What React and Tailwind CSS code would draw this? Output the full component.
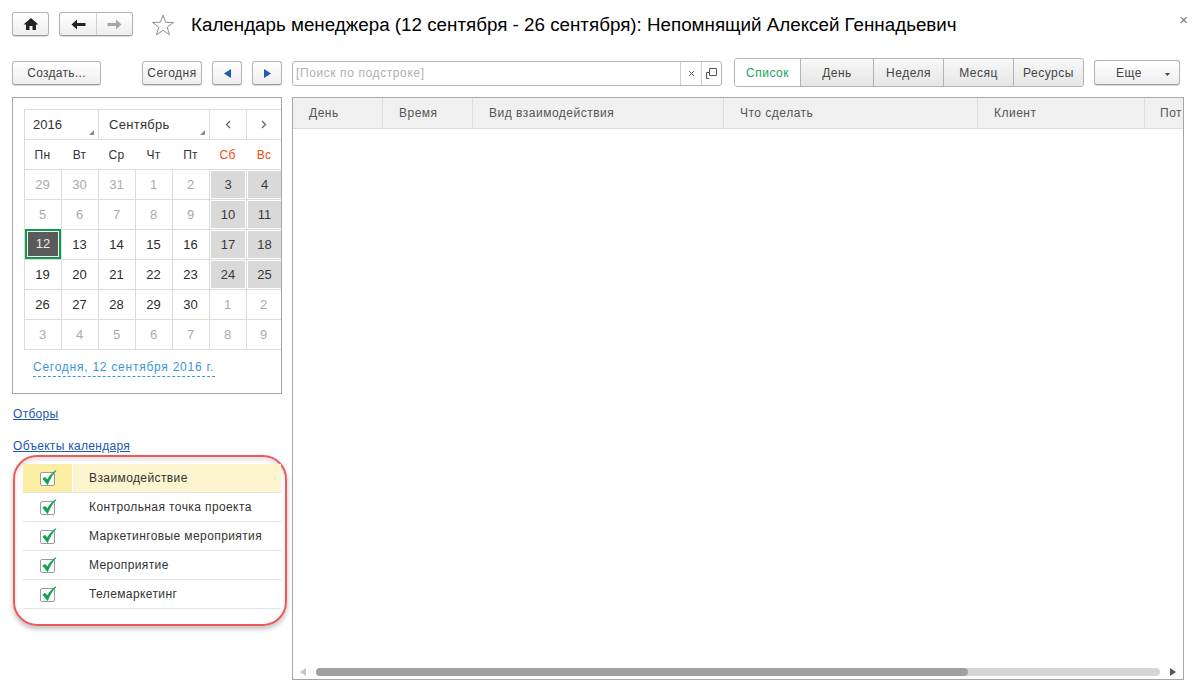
import React from 'react';

const btn = 'flex items-center justify-center rounded-[3px] border border-[#b4b4b4] border-b-[#9a9a9a] bg-gradient-to-b from-white to-[#eeeeee] shadow-[0_1px_1px_rgba(0,0,0,0.15)] text-[#444]';
const cell = 'h-[30px] border-r border-b border-[#dcdcdc] nth-[7n]:border-r-0';

const days = [
    [[29, 0], [30, 0], [31, 0], [1, 0], [2, 0], [3, 2], [4, 2]],
    [[5, 0], [6, 0], [7, 0], [8, 0], [9, 0], [10, 2], [11, 2]],
    [[12, 3], [13, 1], [14, 1], [15, 1], [16, 1], [17, 2], [18, 2]],
    [[19, 1], [20, 1], [21, 1], [22, 1], [23, 1], [24, 2], [25, 2]],
    [[26, 1], [27, 1], [28, 1], [29, 1], [30, 1], [1, 0], [2, 0]],
    [[3, 0], [4, 0], [5, 0], [6, 0], [7, 0], [8, 0], [9, 0]],
];

const weekdays = ['Пн', 'Вт', 'Ср', 'Чт', 'Пт', 'Сб', 'Вс'];
const objects = ['Взаимодействие', 'Контрольная точка проекта', 'Маркетинговые мероприятия', 'Мероприятие', 'Телемаркетинг'];
const columns = [
    ['День', 'w-[90px]'],
    ['Время', 'w-[90px]'],
    ['Вид взаимодействия', 'w-[251px]'],
    ['Что сделать', 'w-[254px]'],
    ['Клиент', 'w-[167px]'],
    ['Пот', 'flex-1'],
];
const views = [
    ['День', 'w-[73px]'],
    ['Неделя', 'w-[70px]'],
    ['Месяц', 'w-[70px]'],
    ['Ресурсы', 'flex-1'],
];

const DayCell = ({ value, kind }) => {
    if (kind === 3) {
        return (
            <div className={`${cell} -mb-px`}>
                <div className="h-[30px] -mt-px border-2 border-[#0b9c4a] bg-white p-px">
                    <div className="h-full flex items-center justify-center bg-[#5a5a5a] text-[#eee] text-[13px]">{value}</div>
                </div>
            </div>
        );
    }
    if (kind === 2) {
        return (
            <div className={`${cell} p-px nth-[7n]:pr-0`}>
                <div className="h-full flex items-center justify-center bg-[#d9d9d9] text-[#3a3a3a] text-[13px]">{value}</div>
            </div>
        );
    }
    return (
        <div className={`${cell} pr-px flex items-center justify-center text-[13px] ${kind === 1 ? 'text-[#2b2b2b]' : 'text-[#aaa]'}`}>
            {value}
        </div>
    );
};

const Check = () => (
    <svg width="18" height="17" viewBox="0 0 18 17" className="block">
        <rect x="1.5" y="2.5" width="14" height="13" rx="1.5" fill="#fff" stroke="#9a9a9a" />
        <path d="M3.8 8.6 L8.5 14.6 C10.5 9.5 13 5 17 0.6 C13 3 10.2 6.2 8.4 10 L6.2 7.4 Z" fill="#0ca24c" stroke="#0ca24c" strokeWidth="0.8" />
    </svg>
);

const Corner = () => (
    <svg width="5" height="5" viewBox="0 0 5 5" className="absolute right-[4px] bottom-[4px]">
        <path d="M5 0 V5 H0 Z" fill="#8a8a8a" />
    </svg>
);

export default function App() {
    return (
        <div className="w-[1199px] h-[684px] overflow-hidden bg-white text-[12px] text-[#444] font-['Liberation_Sans',Arial,sans-serif]">
            <div className="h-[58px] pt-3 pl-3 pr-[11px] flex items-start">
                <div className={`${btn} w-[37px] h-[24px]`}>
                    <svg width="16" height="14" viewBox="0 0 16 14">
                        <path d="M8 1 L15.5 7.5 H13 V13 H9.5 V9 H6.5 V13 H3 V7.5 H0.5 Z" fill="#222" />
                    </svg>
                </div>
                <div className={`${btn} ml-[10px] w-[74px] h-[24px]`}>
                    <div className="w-[37px] h-full flex items-center justify-center border-r border-[#cfcfcf]">
                        <svg width="15" height="11" viewBox="0 0 15 11">
                            <path d="M0.5 5.5 L6 0.5 V4 H14.5 V7 H6 V10.5 Z" fill="#222" />
                        </svg>
                    </div>
                    <div className="flex-1 flex items-center justify-center">
                        <svg width="15" height="11" viewBox="0 0 15 11">
                            <path d="M14.5 5.5 L9 0.5 V4 H0.5 V7 H9 V10.5 Z" fill="#a6a6a6" />
                        </svg>
                    </div>
                </div>
                <svg width="24" height="24" viewBox="0 0 24 24" className="ml-[18px] mt-px">
                    <path d="M12 2 L14.6 9.3 L22.5 9.5 L16.2 14.2 L18.5 21.8 L12 17.3 L5.5 21.8 L7.8 14.2 L1.5 9.5 L9.4 9.3 Z" fill="none" stroke="#8f8f8f" strokeWidth="1" />
                </svg>
                <div className="ml-[16px] mt-[2px] text-[18.8px] leading-[22px] text-black whitespace-nowrap">
                    Календарь менеджера (12 сентября - 26 сентября): Непомнящий Алексей Геннадьевич
                </div>
                <div className="ml-auto mt-[1px] text-[15px] leading-[14px] text-[#777]">×</div>
            </div>

            <div className="h-[39px] pl-3 flex items-start">
                <div className={`${btn} mt-[3px] w-[89px] h-[24px] tracking-[0.3px]`}>Создать...</div>
                <div className={`${btn} mt-[3px] ml-[41px] w-[60px] h-[24px] tracking-[0.5px]`}>Сегодня</div>
                <div className={`${btn} mt-[3px] ml-[10px] w-[30px] h-[24px]`}>
                    <svg width="7" height="9" viewBox="0 0 7 9"><path d="M0 4.5 L7 0 V9 Z" fill="#1c5bb0" /></svg>
                </div>
                <div className={`${btn} mt-[3px] ml-[10px] w-[30px] h-[24px]`}>
                    <svg width="7" height="9" viewBox="0 0 7 9"><path d="M7 4.5 L0 0 V9 Z" fill="#1c5bb0" /></svg>
                </div>
                <div className="mt-[3px] ml-[10px] w-[430px] h-[25px] flex rounded-[3px] border border-[#b4b4b4]">
                    <div className="flex-1 pl-[3px] leading-[23px] text-[#b0b0b0] tracking-[0.6px]">[Поиск по подстроке]</div>
                    <div className="w-[21px] border-l border-[#cfcfcf] flex items-center justify-center">
                        <svg width="7" height="7" viewBox="0 0 7 7"><path d="M1 1 L6 6 M6 1 L1 6" stroke="#666" strokeWidth="1" /></svg>
                    </div>
                    <div className="w-[20px] border-l border-[#cfcfcf] flex items-center justify-center">
                        <svg width="11" height="11" viewBox="0 0 11 11">
                            <path d="M3.5 0.5 H10.5 V7.5 H3.5 Z M0.5 4.5 H3.5 M0.5 4.5 V10.5 M0.5 10.5 H3" fill="none" stroke="#555" strokeWidth="1" />
                        </svg>
                    </div>
                </div>
                <div className="ml-[12px] w-[350px] h-[29px] flex rounded-[3px] border border-[#b4b4b4] overflow-hidden tracking-[0.5px]">
                    <div className="w-[65px] flex items-center justify-center text-[#22a35e] bg-white">Список</div>
                    {views.map(([v, width]) => (
                        <div key={v} className={`${width} flex items-center justify-center border-l border-[#b4b4b4] bg-gradient-to-b from-[#f8f8f8] to-[#e6e6e6]`}>{v}</div>
                    ))}
                </div>
                <div className={`${btn} relative mt-[2px] ml-[10px] w-[86px] h-[25px] tracking-[0.6px] pr-[16px]`}>
                    Еще
                    <svg width="5" height="3" viewBox="0 0 5 3" className="absolute right-[9px] top-[12px]"><path d="M0 0 H5 L2.5 3 Z" fill="#444" /></svg>
                </div>
            </div>

            <div className="h-[587px] pl-3 flex items-start">
                <div className="w-[275px]">
                    <div className="w-[270px] h-[297px] border border-[#a6a6a6] pt-[11px] pl-[11px]">
                        <div className="w-[257px] border-t border-l border-[#dcdcdc]">
                            <div className="flex h-[30px] border-b border-[#dcdcdc] text-[13px] text-[#333]">
                                <div className="relative w-[74px] border-r border-[#dcdcdc] pl-2 leading-[29px]">2016<Corner /></div>
                                <div className="relative w-[111px] border-r border-[#dcdcdc] pl-[10px] leading-[29px] tracking-[0.3px]">Сентябрь<Corner /></div>
                                <div className="w-[37px] border-r border-[#dcdcdc] flex items-center justify-center">
                                    <svg width="6" height="9" viewBox="0 0 6 9"><path d="M5 1 L1.5 4.5 L5 8" fill="none" stroke="#666" strokeWidth="1.3" /></svg>
                                </div>
                                <div className="flex-1 flex items-center justify-center">
                                    <svg width="6" height="9" viewBox="0 0 6 9"><path d="M1 1 L4.5 4.5 L1 8" fill="none" stroke="#666" strokeWidth="1.3" /></svg>
                                </div>
                            </div>
                            <div className="grid grid-cols-[37px_37px_37px_37px_37px_37px_34px] h-[30px] border-b border-[#dcdcdc]">
                                {weekdays.map((d, i) => (
                                    <div key={d} className={`flex items-center justify-center tracking-[0.3px] ${i < 6 ? 'pr-[2px]' : ''} ${i > 4 ? 'text-[#f04a12]' : 'text-[#333]'}`}>{d}</div>
                                ))}
                            </div>
                            <div className="grid grid-cols-[37px_37px_37px_37px_37px_37px_34px]">
                                {days.flat().map(([value, kind], i) => (
                                    <DayCell key={i} value={value} kind={kind} />
                                ))}
                            </div>
                        </div>
                        <div className="ml-[9px] mt-[10px] w-[182px] h-[17px] border-b border-dashed border-[#3a97d6] text-[#3a97d6] leading-[15px] tracking-[0.75px] whitespace-nowrap">
                            Сегодня, 12 сентября 2016 г.
                        </div>
                    </div>
                    <div className="mt-[13px] pl-px leading-[14px] text-[#1a56b0] underline tracking-[0.3px]">Отборы</div>
                    <div className="mt-[18px] pl-px leading-[14px] text-[#1a56b0] underline tracking-[0.3px]">Объекты календаря</div>
                    <div className="mt-[2px] ml-px w-[274px] h-[171px] rounded-[24px] border-2 border-[#ee5a5a] shadow-[0_3px_5px_rgba(0,0,0,0.25),inset_0_3px_4px_rgba(0,0,0,0.12)] pt-[7px] pl-[8px]">
                        {objects.map((name, i) => (
                            <div key={name} className={`flex w-[258px] h-[29px] border-b border-[#e3e3e3] ${i === 0 ? 'bg-[#fdf5cf]' : ''}`}>
                                <div className={`w-[50px] flex items-center justify-center ${i === 0 ? 'bg-[#fdeea6] border-r border-white' : ''}`}>
                                    <Check />
                                </div>
                                <div className="pl-[16px] leading-[28px] text-[#333] tracking-[0.4px] whitespace-nowrap">{name}</div>
                            </div>
                        ))}
                    </div>
                </div>
                <div className="ml-[5px] w-[892px] h-[583px] border border-[#a6a6a6] flex flex-col">
                    <div className="flex h-[31px] border-b border-[#dcdcdc] bg-[#f0f0f0] overflow-hidden">
                        {columns.map(([title, width]) => (
                            <div key={title} className={`${width} shrink-0 pl-4 leading-[30px] border-r border-[#dcdcdc] tracking-[0.5px] text-[#555] last:border-r-0 last:pl-[15px]`}>{title}</div>
                        ))}
                    </div>
                    <div className="flex-1" />
                    <div className="h-[11px] pl-[7px] pr-[7px] flex items-start gap-[10px]">
                        <svg width="6" height="8" viewBox="0 0 6 8" className="shrink-0"><path d="M0 4 L6 0 V8 Z" fill="#c8c8c8" /></svg>
                        <div className="flex-1 h-[8px] rounded bg-[#d6d6d6]">
                            <div className="w-[652px] h-full rounded bg-[#a0a0a0]" />
                        </div>
                        <svg width="6" height="8" viewBox="0 0 6 8" className="shrink-0"><path d="M6 4 L0 0 V8 Z" fill="#555" /></svg>
                    </div>
                </div>
            </div>
        </div>
    );
}
